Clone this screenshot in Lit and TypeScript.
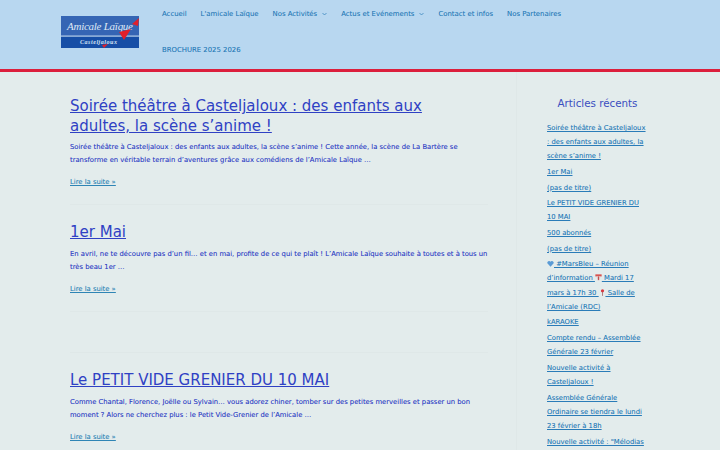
import { LitElement, html, css, svg } from "lit";
import { customElement } from "lit/decorators.js";

const heart = svg`<path d="M5 9.500 L0.5 4.800 A2.600 2.600 0 0 1 5 2.400 A2.600 2.600 0 0 1 9.500 4.800 Z" fill="#5b9bd5"/>`;
const cal = svg`<rect x="0.500" y="0.500" width="9" height="3" fill="#d9534f"/><path d="M2 3.500h6l-2 6h-2z" fill="#e0cfcf"/><rect x="4.200" y="3.500" width="1.600" height="5" fill="#c0504d"/>`;
const pin = svg`<circle cx="5" cy="2.600" r="2.300" fill="#d9363e"/><rect x="4.400" y="4" width="1.200" height="5.800" fill="#a86a6a"/>`;
const ico = (s: unknown) => html`<svg class="emoji" viewBox="0 0 10 10" aria-hidden="true">${s}</svg>`;
const chev = html`<svg viewBox="0 0 5 4" aria-hidden="true"><path d="M.5 1 2.500 3 4.500 1" fill="none" stroke="currentColor" stroke-width=".7"/></svg>`;

const posts = [
  {
    t: "Soirée théâtre à Casteljaloux : des enfants aux adultes, la scène s’anime !",
    b: "Soirée théâtre à Casteljaloux : des enfants aux adultes, la scène s’anime ! Cette année, la scène de La Bartère se transforme en véritable terrain d’aventures grâce aux comédiens de l’Amicale Laïque …",
  },
  {
    t: "1er Mai",
    b: "En avril, ne te découvre pas d’un fil… et en mai, profite de ce qui te plaît ! L’Amicale Laïque souhaite à toutes et à tous un très beau 1er …",
  },
  {
    t: "Le PETIT VIDE GRENIER DU 10 MAI",
    b: "Comme Chantal, Florence, Joëlle ou Sylvain… vous adorez chiner, tomber sur des petites merveilles et passer un bon moment ? Alors ne cherchez plus : le Petit Vide-Grenier de l’Amicale …",
  },
];

@customElement("app-root")
export class AppRoot extends LitElement {
  static styles = css`
    :host {
      display: block;
      width: 720px;
      height: 450px;
      overflow: hidden;
      background: #e3ecec;
      font-family: "DejaVu Sans", sans-serif;
    }
    a { color: inherit; }
    .head {
      height: 69px;
      background: #b8d7f0;
      border-bottom: 3px solid #dc1f3c;
      display: flex;
      padding-left: 61px;
    }
    .logo {
      flex: none;
      width: 78px;
      height: 32px;
      margin-top: 16px;
      display: block;
    }
    .nav {
      display: flex;
      flex-wrap: wrap;
      align-content: flex-start;
      margin-left: 23px;
      width: 460px;
      font-size: 6.900px;
      color: #2a7cb8;
      text-shadow: 0 0 0.5px color-mix(in srgb, currentColor 40%, transparent);
    }
    .nav span {
      height: 36px;
      margin-right: 14px;
      white-space: nowrap;
      display: flex;
      align-items: center;
      padding-bottom: 8px;
      box-sizing: border-box;
    }
    .nav svg { width: 5px; height: 4px; margin-left: 5px; }
    .brochure { flex-basis: 100%; }
    .main {
      display: flex;
      padding-left: 70px;
    }
    .content { width: 418px; flex: none; padding-top: 25px; }
    .post { padding-bottom: 15px; border-bottom: 1px solid #dfe8e8; }
    .post + .post { padding-top: 18px; }
    .post.third { padding-top: 18.500px; border: none; }
    .spacer { height: 40px; border-bottom: 1px solid #dfe8e8; }
    h2 {
      margin: 0 0 5px;
      padding-right: 20px;
      font-size: 15px;
      line-height: 19.500px;
      font-weight: 400;
      color: #2f41c4;
    }
    p {
      margin: 0 0 9px;
      font-size: 6.800px;
      line-height: 13px;
      color: #2f41c4;
      text-shadow: 0 0 0.5px color-mix(in srgb, currentColor 40%, transparent);
    }
    .more {
      display: block;
      font-size: 6.800px;
      line-height: 13px;
      color: #2f85b5;
      text-shadow: 0 0 0.5px color-mix(in srgb, currentColor 40%, transparent);
    }
    .side {
      width: 101px;
      margin-left: 28px;
      padding-left: 30px;
      padding-top: 24px;
      border-left: 1px solid #dfe8e8;
      flex: none;
    }
    h3 {
      margin: 0 0 11px;
      font-size: 10.300px;
      line-height: 14px;
      font-weight: 400;
      text-align: center;
      color: #3a4ec0;
    }
    ul {
      list-style: none;
      margin: 0;
      padding: 0;
      font-size: 6.800px;
      line-height: 14.200px;
      color: #2a7cb8;
      text-shadow: 0 0 0.5px color-mix(in srgb, currentColor 40%, transparent);
    }
    li { margin-bottom: 1.400px; }
    .emoji { width: 7px; height: 7px; vertical-align: -1px; }
  `;

  render() {
    return html`
      <div class="head">
        <svg class="logo" viewBox="0 0 78 32" role="img" aria-label="Amicale Laïque Casteljaloux">
          <rect width="78" height="32" fill="#3565b4" />
          <rect y="20" width="78" height="12" fill="#164ea6" />
          <rect y="19.500" width="78" height="1.200" fill="#b8d0ea" />
          <text x="6" y="14" font-family="Liberation Serif" font-style="italic" font-size="11" fill="#dfe8f5" textLength="66">Amicale Laïque</text>
          <text x="19" y="28" font-family="Liberation Serif" font-style="italic" font-weight="700" font-size="6" fill="#d8e4f4" textLength="37">Casteljaloux</text>
          <path d="M78 2 L71 8 L77 10 Z M70 13 L58 16 L63 24 Z M47 28 L41 29 L43 32 Z" fill="#e0202c" />
        </svg>
        <div class="nav">
          <span>Accueil</span>
          <span>L'amicale Laïque</span>
          <span>Nos Activités${chev}</span>
          <span>Actus et Evénements${chev}</span>
          <span>Contact et infos</span>
          <span>Nos Partenaires</span>
          <span class="brochure">BROCHURE 2025 2026</span>
        </div>
      </div>
      <div class="main">
        <div class="content">
          ${posts.map(
            (p, i) => html`<div class="post ${i === 2 ? "third" : ""}">
                <h2><a href="#">${p.t}</a></h2>
                <p>${p.b}</p>
                <a class="more" href="#">Lire la suite »</a>
              </div>
              ${i === 1 ? html`<div class="spacer"></div>` : ""}`
          )}
        </div>
        <div class="side">
          <h3>Articles récents</h3>
          <ul>
            <li><a href="#">Soirée théâtre à Casteljaloux : des enfants aux adultes, la scène s’anime !</a></li>
            <li><a href="#">1er Mai</a></li>
            <li><a href="#">(pas de titre)</a></li>
            <li><a href="#">Le PETIT VIDE GRENIER DU 10 MAI</a></li>
            <li><a href="#">500 abonnés</a></li>
            <li><a href="#">(pas de titre)</a></li>
            <li><a href="#">${ico(heart)} #MarsBleu – Réunion d’information ${ico(cal)} Mardi 17 mars à 17h 30 ${ico(pin)} Salle de l’Amicale (RDC)</a></li>
            <li><a href="#">kARAOKE</a></li>
            <li><a href="#">Compte rendu – Assemblée Générale 23 février</a></li>
            <li><a href="#">Nouvelle activité à Casteljaloux !</a></li>
            <li><a href="#">Assemblée Générale Ordinaire se tiendra le lundi 23 février à 18h</a></li>
            <li><a href="#">Nouvelle activité : "Mélodias</a></li>
          </ul>
        </div>
      </div>
    `;
  }
}
